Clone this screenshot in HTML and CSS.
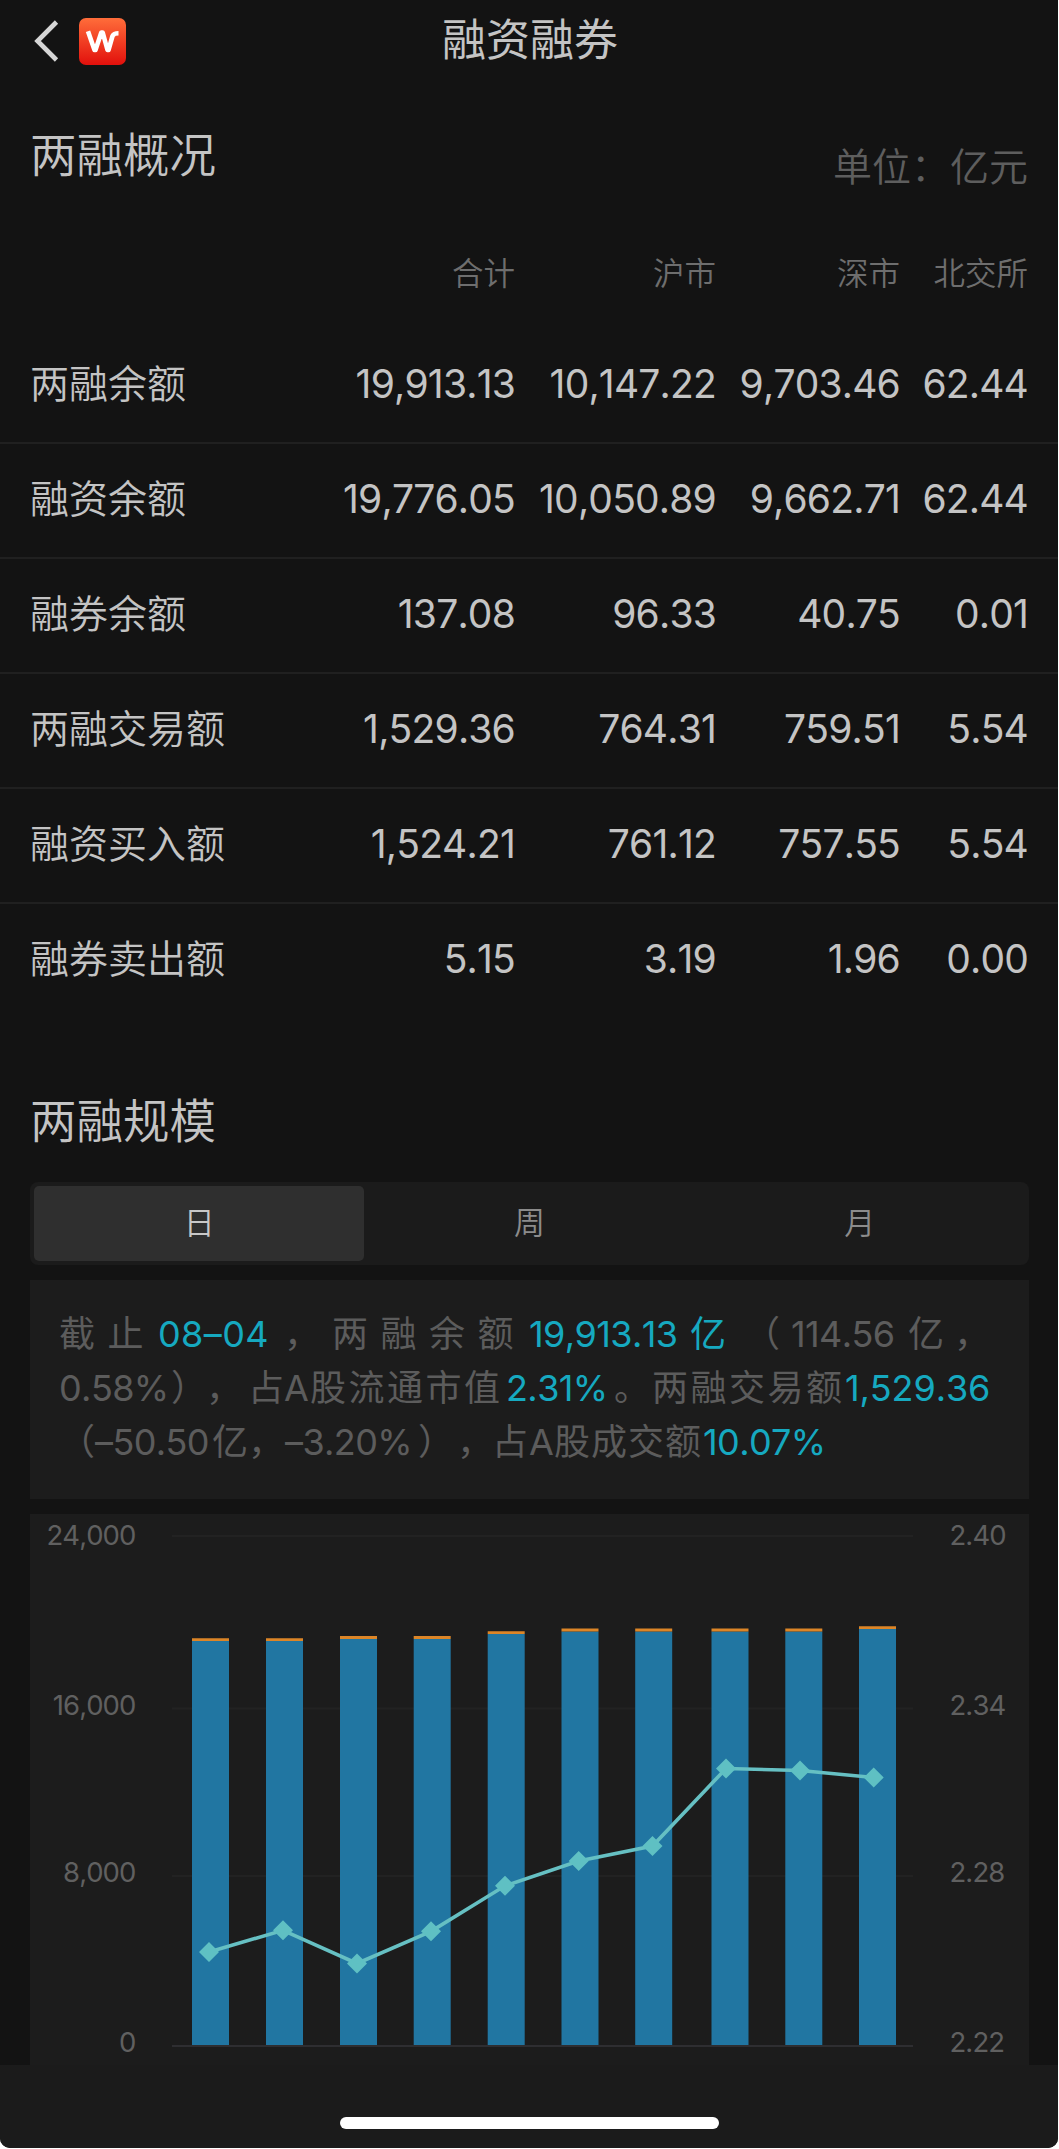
FILE: index.html
```html
<!DOCTYPE html>
<html lang="zh-CN">
<head>
<meta charset="utf-8">
<title>融资融券</title>
<link rel="stylesheet" href="styles.css">
</head>
<body>
<div class="screen">
  <header class="nav">
    <svg class="back" viewBox="0 0 26 42" width="26" height="42"><path d="M22.500 2 L3.500 21 L22.500 40" fill="none" stroke="#d6d6d6" stroke-width="4.600"/></svg>
    <div class="logo">
      <svg viewBox="0 0 47 47" width="47" height="47"><path d="M9 13.300 L15.500 32 H16.500 L22.300 14.500 H23.700 L28.500 32 H29.500 L33.500 18 Q34.800 15.300 39.500 15.300" fill="none" stroke="#fff" stroke-width="4.600" stroke-linejoin="round"/></svg>
    </div>
    <h1>融资融券</h1>
  </header>

  <section class="overview">
    <div class="heading"><h2>两融概况</h2><span class="unit">单位：亿元</span></div>
    <div class="row head"><span></span><span>合计</span><span>沪市</span><span>深市</span><span>北交所</span></div>
    <div class="row"><b>两融余额</b><span>19,913.13</span><span>10,147.22</span><span>9,703.46</span><span>62.44</span></div>
    <div class="row"><b>融资余额</b><span>19,776.05</span><span>10,050.89</span><span>9,662.71</span><span>62.44</span></div>
    <div class="row"><b>融券余额</b><span>137.08</span><span>96.33</span><span>40.75</span><span>0.01</span></div>
    <div class="row"><b>两融交易额</b><span>1,529.36</span><span>764.31</span><span>759.51</span><span>5.54</span></div>
    <div class="row"><b>融资买入额</b><span>1,524.21</span><span>761.12</span><span>757.55</span><span>5.54</span></div>
    <div class="row"><b>融券卖出额</b><span>5.15</span><span>3.19</span><span>1.96</span><span>0.00</span></div>
  </section>

  <section class="scale">
    <h2>两融规模</h2>
    <div class="tabs"><span class="on">日</span><span>周</span><span>月</span></div>
    <div class="summary">
      <div class="line l1"><span class="wide">截止</span><em class="loose">08–04</em><span>，</span><span class="wide">两融余额</span><em>19,913.13</em><em>亿</em><span>（</span><span>114.56</span><span>亿</span><span>，</span></div>
      <div class="line l2"><span>0.58%</span><span>）</span><span>，</span><span>占</span><span>A</span><span class="mid">股流通市值</span><em>2.31%</em><span>。</span><span class="mid">两融交易额</span><em class="open">1,529.36</em></div>
      <div class="line l3"><span>（</span><span>–50.50</span><span>亿</span><span>，</span><span>–3.20%</span><span>）</span><span>，</span><span>占</span><span>A</span><span class="snug">股成交额</span><em>10.07%</em></div>
    </div>
    <div class="chart">
      <svg viewBox="30 1514 999 551" width="999" height="551">
        <g class="grid"><path d="M172 1536H913M172 1708.500H913M172 1876H913"/></g>
        <g class="bars">
          <path d="M192 1641h37v404h-37zM266 1641h37v404h-37zM340 1639h37v406h-37zM413.700 1639h37v406h-37zM487.700 1634h37v411h-37zM561.500 1631.500h37v413.500h-37zM635.200 1631.500h37v413.500h-37zM711.500 1631.500h37v413.500h-37zM785.300 1631.500h37v413.500h-37zM859 1629h37v416h-37z"/>
        </g>
        <g class="caps">
          <path d="M192 1638.300h37v2.700h-37zM266 1638.300h37v2.700h-37zM340 1636h37v3h-37zM413.700 1636h37v3h-37zM487.700 1631.200h37v2.800h-37zM561.500 1628.500h37v3h-37zM635.200 1628.500h37v3h-37zM711.500 1628.500h37v3h-37zM785.300 1628.500h37v3h-37zM859 1626.200h37v2.800h-37z"/>
        </g>
        <path class="axis" d="M172 2046H913"/>
        <polyline class="trend" points="209,1952 283,1930.300 357,1963.500 431,1931.300 505,1885.800 578.700,1861 652.500,1846 726,1768.500 800,1770.500 873.700,1777.500"/>
        <g class="dots"><path d="M209 1942l10 10l-10 10l-10-10zM283 1920.300l10 10l-10 10l-10-10zM357 1953.500l10 10l-10 10l-10-10zM431 1921.300l10 10l-10 10l-10-10zM505 1875.800l10 10l-10 10l-10-10zM578.700 1851l10 10l-10 10l-10-10zM652.500 1836l10 10l-10 10l-10-10zM726 1758.500l10 10l-10 10l-10-10zM800 1760.500l10 10l-10 10l-10-10zM873.700 1767.500l10 10l-10 10l-10-10z"/></g>
        <g class="ticks left">
          <text x="135.500" y="1545">24,000</text><text x="135.500" y="1715">16,000</text><text x="135.500" y="1882">8,000</text><text x="135.500" y="2052">0</text>
        </g>
        <g class="ticks">
          <text x="949.500" y="1545">2.40</text><text x="949.500" y="1715">2.34</text><text x="949.500" y="1882">2.28</text><text x="949.500" y="2052">2.22</text>
        </g>
      </svg>
    </div>
  </section>
  <footer class="home"><i></i></footer>
</div>
</body>
</html>
```
FILE: styles.css
```css
* { box-sizing: border-box; margin: 0; padding: 0; }
html { background: #fff; }
body {
  width: 1059px;
  font-family: Inter, "Noto Sans CJK SC", sans-serif;
  font-weight: 400;
  font-kerning: none;
  color: #c4c4c4;
  text-spacing-trim: space-all;
}
h2, b, .unit, .head, .tabs { font-family: "Noto Sans CJK SC", sans-serif; font-weight: 350; }
em, i { font-style: normal; }

.screen {
  width: 1058px;
  height: 2148px;
  background: #131313;
  border-radius: 0 0 10px 10px;
  overflow: hidden;
  display: flex;
  flex-direction: column;
}

.nav {
  height: 82px;
  padding-left: 34px;
  display: grid;
  grid-template-columns: 45px 47px 1fr;
  align-items: center;
}
.logo {
  width: 47px;
  height: 47px;
  border-radius: 7px;
  background: linear-gradient(#ff6d3a, #e2100c);
}
.logo svg, .back, .chart svg { display: block; }
.nav h1 {
  height: 82px;
  font-size: 44px;
  font-weight: 400;
  line-height: 80px;
  padding-left: 316px;
}

.overview { height: 972px; }
.heading {
  height: 146px;
  padding: 37px 30px 0 30px;
  display: flex;
  justify-content: space-between;
}
h2 { font-size: 46.5px; line-height: 66px; }
.unit { font-size: 39px; line-height: 91px; color: #5e5e5e; }
.row {
  height: 115px;
  display: grid;
  grid-template-columns: 300px 185px 201px 184px 128px;
  padding: 0 30px 4px;
  align-items: center;
  border-bottom: 2px solid #202020;
  font-size: 39px;
  letter-spacing: -0.8px;
}
.row:last-child { border-color: transparent; }
.row span { text-align: right; line-height: 60px; }
.row b { letter-spacing: 0; white-space: nowrap; line-height: 54px; padding-bottom: 5px; }
.row.head {
  height: 101px;
  padding-bottom: 16px;
  border-bottom: 0;
  font-size: 31.500px;
  letter-spacing: 0;
  color: #6e6e6e;
}

.scale { height: 1011px; padding: 31px 29px 0 30px; }
.tabs {
  margin-top: 31px;
  height: 83px;
  padding: 4px;
  border-radius: 8px;
  background: #1b1b1b;
  display: grid;
  grid-template-columns: repeat(3, 1fr);
  font-size: 31px;
  line-height: 70px;
  text-align: center;
  color: #8c8c8c;
}
.tabs .on { background: #2f2f2f; border-radius: 5px; color: #c8c8c8; }
.summary {
  margin-top: 15px;
  height: 219px;
  padding: 27px 0 0 29px;
  background: #1c1c1c;
  font-size: 36px;
  line-height: 54px;
  letter-spacing: -0.600px;
  color: #5c5c5c;
}
.line { display: grid; white-space: nowrap; }
.line em { color: #16a9c0; }
.l1 { grid-template-columns: 99px 126px 48px 197px 161px 54px 47px 117px 46px 41px; }
.l2 { grid-template-columns: 112px 35px 42px 36px 26px 196px 108px 38px 193px 150px; }
.l3 { grid-template-columns: 36px 117px 36px 37px 133px 39px 35px 37px 25px 149px 130px; }
.line .wide { letter-spacing: 12.500px; }
.line .mid { letter-spacing: 2.500px; }
.line .snug { letter-spacing: 1px; }
.line .loose { letter-spacing: 0.400px; }
.line .open { letter-spacing: -0.100px; }

.chart { margin-top: 15px; height: 551px; background: #1c1c1c; }
.grid { stroke: #222; stroke-width: 2; fill: none; }
.axis { stroke: #2e2e31; stroke-width: 2; }
.bars { fill: #2176a2; }
.caps { fill: #dc8527; }
.trend { fill: none; stroke: #66c0c3; stroke-width: 3.600; }
.dots { fill: #5fc0c3; }
.ticks { font-size: 27.500px; fill: #606060; letter-spacing: -0.900px; }
.left { text-anchor: end; }

.home { flex: 1; background: #1b1b1b; padding: 52px 0 0 340px; }
.home i { display: block; width: 379px; height: 12px; border-radius: 6px; background: #fff; }
```
